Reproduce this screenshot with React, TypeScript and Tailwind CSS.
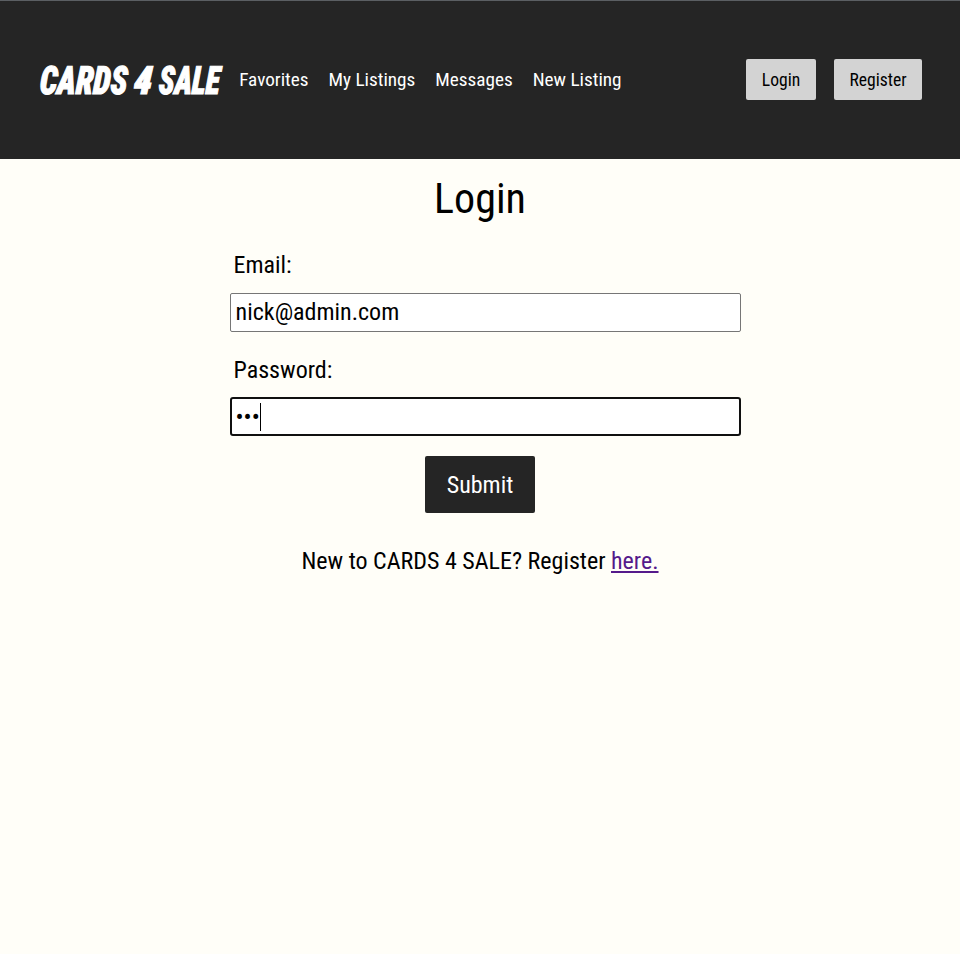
const links = ["Favorites", "My Listings", "Messages", "New Listing"];

export default function App() {
  return (
    <div className="h-[954px] bg-[#fffef8] text-black [font-family:'Roboto_Condensed',Roboto,sans-serif] [font-stretch:75%]">
      <header className="flex h-[159px] items-center border-t border-[#5b5f63] bg-[#252525] pr-[38px] pl-10 text-white">
        <h1 className="flex w-[199.2px] translate-y-px text-[39px] leading-none font-black whitespace-nowrap italic [-webkit-text-stroke:1.2px_white]">
          <span className="w-[94px] origin-left [transform:scaleX(0.81)_skewX(-4deg)]">CARDS </span>
          <span className="w-[26px] origin-left [transform:scaleX(0.95)_skewX(-4deg)]">4 </span>
          <span className="origin-left [transform:scaleX(0.76)_skewX(-4deg)]">SALE</span>
        </h1>
        <nav className="flex gap-5 text-[19.2px] whitespace-nowrap">
          {links.map((link) => (
            <a key={link} href="#">{link}</a>
          ))}
        </nav>
        <div className="mb-0.5 ml-auto flex gap-[18px] text-[17.6px] text-black">
          <button className="h-[41px] w-[70px] rounded-xs bg-[#d3d3d3] pt-0.5">Login</button>
          <button className="h-[41px] w-[88px] rounded-xs bg-[#d3d3d3] pt-0.5">Register</button>
        </div>
      </header>
      <main className="flex flex-col items-center text-2xl">
        <h2 className="mt-4 text-[42px] leading-[48px]">Login</h2>
        <form className="ml-[11px] flex w-[511px] flex-col">
          <label className="mt-[26px] ml-[3.5px] leading-8">Email:</label>
          <div className="mt-3 flex h-[39px] items-center rounded-xs border border-[#767676] bg-white px-[4.6px] pb-0.5">nick@admin.com</div>
          <label className="mt-[22px] ml-[3.5px] leading-8">Password:</label>
          <div className="mt-[11px] flex h-[39px] items-center rounded-[3px] border-2 border-[#101010] bg-white px-[3.5px]">
            <span>•••</span>
            <span className="ml-[0.5px] h-7 w-px bg-black" />
          </div>
        </form>
        <button className="mt-5 h-[57px] w-[110px] rounded-xs bg-[#252525] text-white">Submit</button>
        <p className="mt-8 leading-8">
          New to CARDS 4 SALE? Register <a href="#" className="text-[#551a8b] underline">here.</a>
        </p>
      </main>
    </div>
  );
}
